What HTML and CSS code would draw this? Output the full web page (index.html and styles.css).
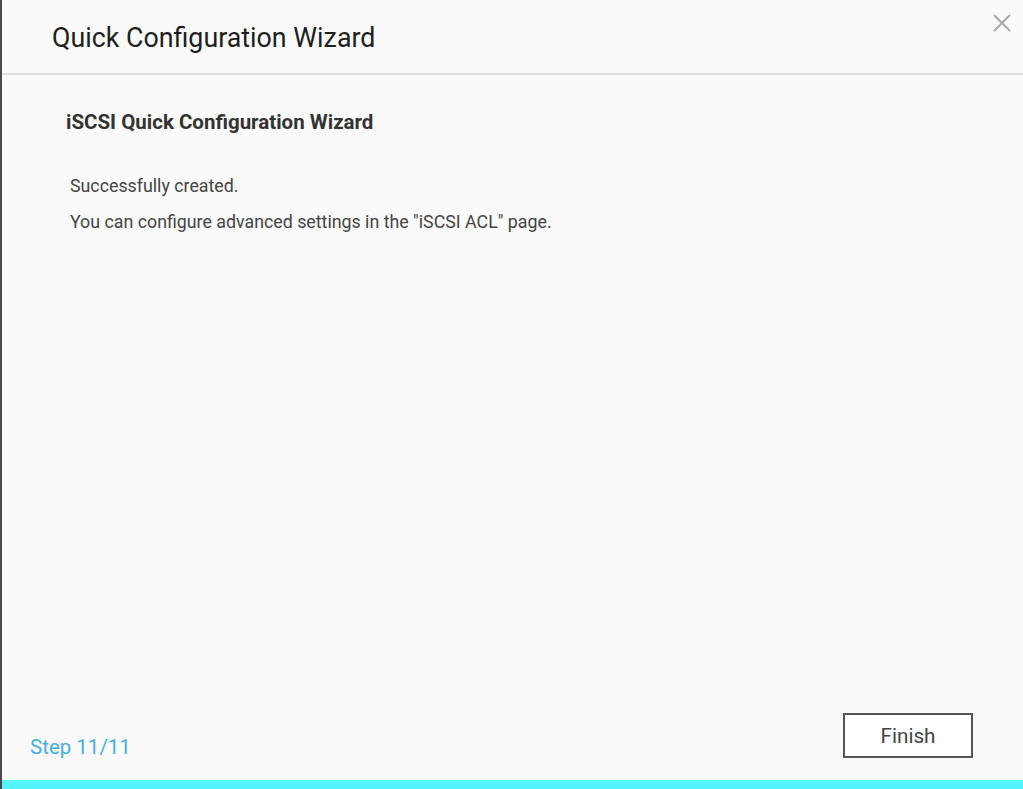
FILE: index.html
```html
<!DOCTYPE html>
<html>
<head>
<meta charset="utf-8">
<link rel="stylesheet" href="styles.css">
</head>
<body>
<div class="dialog">
  <header class="head">
    <h1 class="title">Quick Configuration Wizard</h1>
    <button class="close" aria-label="Close">
      <svg width="18" height="18" viewBox="0 0 18 18"><path d="M1 1L17 17M17 1L1 17" stroke="#a8a8a8" stroke-width="2" fill="none"/></svg>
    </button>
  </header>
  <main class="body">
    <h2 class="subtitle">iSCSI Quick Configuration Wizard</h2>
    <p class="msg">Successfully created.</p>
    <p class="msg">You can configure advanced settings in the "iSCSI ACL" page.</p>
  </main>
  <footer class="foot">
    <span class="step">Step 11/11</span>
    <button class="finish">Finish</button>
  </footer>
  <div class="bar"></div>
</div>
</body>
</html>
```
FILE: styles.css
```css
html, body {
  margin: 0;
  padding: 0;
  height: 100%;
}
body {
  font-family: Roboto, "Liberation Sans", Arial, sans-serif;
  background: #fafafa;
}
.dialog {
  height: 789px;
  box-sizing: border-box;
  border-left: 2px solid #4a4a4a;
  display: flex;
  flex-direction: column;
  background: #fafafa;
}
.head {
  height: 75px;
  box-sizing: border-box;
  border-bottom: 2px solid #dedede;
  display: flex;
  align-items: flex-start;
  justify-content: space-between;
  padding: 0 12px 0 50px;
}
.title {
  margin: 22px 0 0;
  font-size: 26.8px;
  font-weight: 400;
  color: #1e1e1e;
  line-height: 32px;
}
.close {
  margin-top: 14px;
  padding: 0;
  border: 0;
  background: none;
  width: 18px;
  height: 18px;
}
.close svg { display: block; }
.body {
  flex: 1;
  padding: 35px 0 0 64px;
}
.subtitle {
  margin: 0 0 40px;
  font-size: 20.5px;
  font-weight: 700;
  color: #333;
  line-height: 24px;
}
.msg {
  margin: 0 0 13px 4px;
  font-size: 17.8px;
  color: #444;
  line-height: 23px;
}
.msg:first-of-type {
  margin-top: 1px;
}
.foot {
  display: flex;
  justify-content: space-between;
  align-items: flex-start;
  padding: 0 50px 0 28px;
  height: 68px;
}
.step {
  margin-top: 23px;
  font-size: 20.5px;
  color: #3fb1e3;
  line-height: 24px;
}
.finish {
  width: 130px;
  height: 45px;
  margin-top: 1px;
  box-sizing: border-box;
  border: 2px solid #555;
  background: #fff;
  font-family: Roboto, "Liberation Sans", Arial, sans-serif;
  font-size: 20.7px;
  color: #444;
  padding: 0;
}
.bar {
  height: 9px;
  background: #55f4fc;
}
```
